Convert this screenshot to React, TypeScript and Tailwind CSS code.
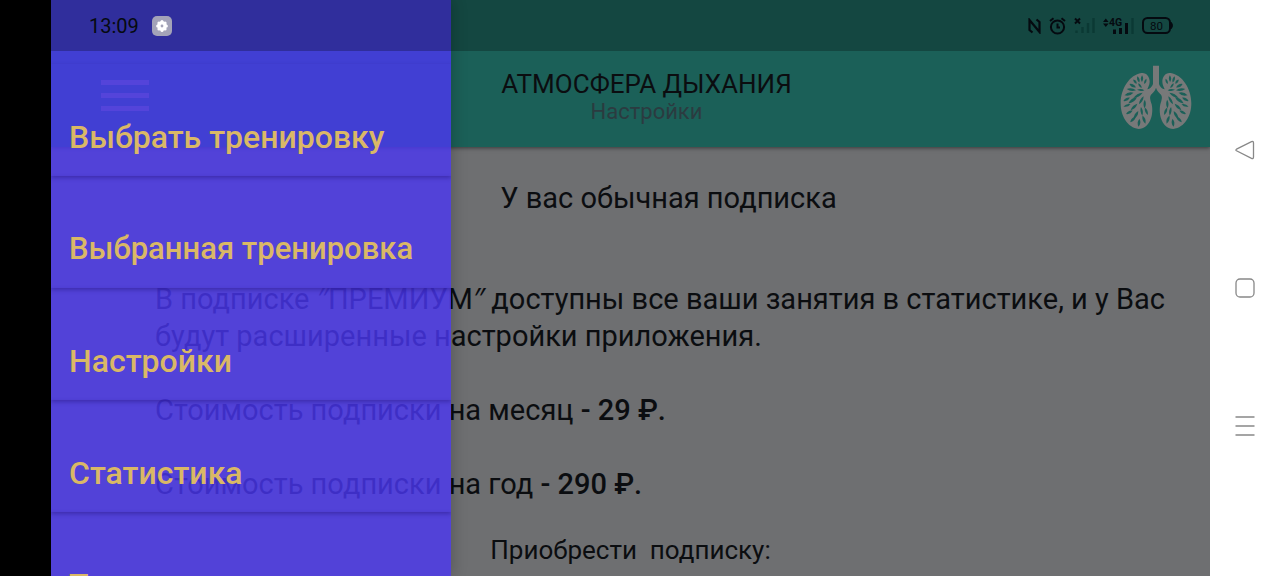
import React from "react";

type Leaf = [x: number, y: number, length: number, width: number, angle: number];

const leaves: Leaf[] = [
  [73, 78, 16, 7, 50],
  [83, 71, 20, 7, 72],
  [94, 69, 20, 7, 92],
  [104, 77, 17, 6, 112],
  [66, 90, 22, 8, 28],
  [88, 90, 18, 6, 55],
  [62, 102, 28, 8, 8],
  [90, 103, 22, 6, 2],
  [55, 115, 28, 9, -16],
  [82, 119, 32, 8, -30],
  [48, 131, 22, 8, -28],
  [66, 134, 32, 9, -35],
  [92, 134, 28, 7, -60],
  [49, 149, 22, 7, -18],
  [70, 154, 28, 8, -44],
  [102, 145, 26, 7, -88],
  [56, 170, 22, 8, -28],
  [76, 178, 28, 8, -60],
  [93, 167, 26, 7, 80],
  [107, 167, 24, 7, 68],
  [67, 191, 24, 8, -46],
  [85, 201, 24, 8, -84],
  [100, 192, 26, 8, 70],
];

function Lung() {
  return (
    <g>
      <path
        fill="#777979"
        d="M92 52C108 50 117 64 117 78C117 88 112 94 110 101C120 98 127 91 128 78L136 78L136 96C133 106 127 110 121 117C116 124 119 133 123 146C130 178 117 219 84 220C50 216 30 181 30 143C30 98 58 57 92 52Z"
      />
      {leaves.map(([x, y, length, width, angle]) => (
        <path
          key={`${x}-${y}`}
          fill="#1b6058"
          transform={`translate(${x} ${y}) rotate(${angle})`}
          d={`M${-length / 2} 0Q0 ${-width} ${length / 2} 0Q0 ${width} ${-length / 2} 0Z`}
        />
      ))}
    </g>
  );
}

function LungsLogo() {
  return (
    <svg viewBox="28 28 216 195" className="h-[65px] w-18" role="img" aria-label="Лёгкие">
      <Lung />
      <g transform="translate(272 0) scale(-1 1)">
        <Lung />
      </g>
      <path fill="#777979" d="M127 30H145V98L136 90L127 98Z" />
    </svg>
  );
}

function StatusBar() {
  return (
    <div className="absolute inset-x-0 top-0 z-20 flex h-[51px] items-center justify-between bg-black/26 pr-9 pl-[38px] text-[#050a10]">
      <div className="flex items-center gap-[13px]">
        <span className="text-xl">13:09</span>
        <svg viewBox="0 0 20 20" className="size-5" aria-hidden="true">
          <rect width="20" height="20" rx="5" fill="#a3a3b8" />
          <g fill="#fff">
            <circle cx="10" cy="10" r="4.8" />
            <circle cx="10" cy="5.6" r="1.5" />
            <circle cx="10" cy="14.4" r="1.5" />
            <circle cx="5.6" cy="10" r="1.5" />
            <circle cx="14.4" cy="10" r="1.5" />
            <circle cx="6.9" cy="6.9" r="1.5" />
            <circle cx="13.1" cy="6.9" r="1.5" />
            <circle cx="6.9" cy="13.1" r="1.5" />
            <circle cx="13.1" cy="13.1" r="1.5" />
          </g>
          <circle cx="10" cy="10" r="1.4" fill="#a3a3b8" />
        </svg>
      </div>
      <div className="flex items-center gap-2">
        <svg viewBox="0 0 13 16" className="h-4 w-[13px]" fill="none" stroke="currentColor" strokeWidth="2.2" aria-hidden="true">
          <path d="M4.500 14.500L1.500 12V2L11.500 14V4L8.500 1.500" />
        </svg>
        <svg viewBox="0 0 17 18" className="h-[18px] w-[17px]" fill="none" stroke="currentColor" strokeWidth="2" aria-hidden="true">
          <circle cx="8.500" cy="10" r="6.600" />
          <path d="M8.500 6.500V10.500H11M1 4L4.500 1.200M16 4L12.500 1.200" />
        </svg>
        <svg viewBox="0 0 21 17" className="h-[17px] w-[21px]" aria-hidden="true">
          <path d="M1 1.500L6 6.500M6 1.500L1 6.500" stroke="currentColor" strokeWidth="2" />
          <path d="M2.500 16V13.500M8.500 16V10M14 16V6M19.500 16V1" stroke="#05302b" strokeOpacity=".6" strokeWidth="2.400" />
        </svg>
        <svg viewBox="0 0 31 18" className="h-[18px] w-[31px]" aria-hidden="true">
          <path d="M0 5L2.800 1.500L5.600 5ZM0 6.500L2.800 10L5.600 6.500Z" fill="currentColor" />
          <text x="6" y="9" fontSize="10.500" fontWeight="700" fill="currentColor">4G</text>
          <path d="M11.500 17V12.500M17.500 17V11M23.500 17V6" stroke="currentColor" strokeWidth="3" />
          <path d="M29.500 17V1" stroke="#05302b" strokeOpacity=".6" strokeWidth="2.400" />
        </svg>
        <svg viewBox="0 0 32 17" className="h-[17px] w-8" aria-hidden="true">
          <rect x="1" y="1" width="27" height="15" rx="4.500" fill="none" stroke="currentColor" strokeWidth="2" />
          <path d="M29.500 5.500Q31.500 8.500 29.500 11.500Z" fill="currentColor" stroke="currentColor" />
          <text x="14.500" y="12.500" fontSize="11.500" textAnchor="middle" fill="currentColor">80</text>
        </svg>
      </div>
    </div>
  );
}

const menu = [
  { label: "Выбрать тренировку", size: "text-[32px]" },
  { label: "Выбранная тренировка", size: "text-[31px]" },
  { label: "Настройки", size: "text-[32px]" },
  { label: "Статистика", size: "text-[32px]" },
  { label: "Техника", size: "text-[32px]" },
];

function Drawer() {
  return (
    <nav className="absolute inset-y-0 left-0 z-10 w-[400px] overflow-hidden bg-[#4b37f2]/80 pt-16 shadow-[2px_0_14px_rgba(0,0,0,0.2)]">
      {menu.map(({ label, size }) => (
        <a
          key={label}
          href="#"
          className={`flex h-28 items-end pr-4 pb-[19px] pl-[18px] leading-10 font-medium whitespace-nowrap text-[#dab866] shadow-[0_2px_4px_rgba(30,15,110,0.4)] ${size}`}
        >
          {label}
        </a>
      ))}
    </nav>
  );
}

function SystemNav() {
  return (
    <nav className="flex w-[70px] shrink-0 flex-col items-center justify-center gap-[114px] bg-white text-[#888]">
      <button type="button" aria-label="Назад">
        <svg viewBox="0 0 24 24" className="size-6" fill="none" stroke="currentColor" strokeWidth="1.3">
          <path d="M3.500 11.200L18.500 3.600Q20.500 3 20.500 5V19Q20.500 21 18.500 20.400L3.500 12.800Q2.200 12 3.500 11.200Z" />
        </svg>
      </button>
      <button type="button" aria-label="Домой">
        <svg viewBox="0 0 24 24" className="size-6" fill="none" stroke="currentColor" strokeWidth="1.3">
          <rect x="3" y="3" width="18" height="18" rx="4" />
        </svg>
      </button>
      <button type="button" aria-label="Недавние">
        <svg viewBox="0 0 24 24" className="size-6" fill="none" stroke="currentColor" strokeWidth="1.3">
          <path d="M2.500 3H21.500M2.500 12H21.500M2.500 21H21.500" />
        </svg>
      </button>
    </nav>
  );
}

function Quote() {
  return <span className="font-['Open_Sans','Noto_Sans',sans-serif] leading-none font-medium italic">″</span>;
}

export default function App() {
  return (
    <div className="flex h-screen overflow-hidden bg-black font-['Roboto','Noto_Sans',sans-serif]">
      <div className="w-[51px] shrink-0" />
      <div className="relative flex min-w-0 flex-1 flex-col overflow-hidden bg-[#6e6f71] text-[#0b0d10]">
        <StatusBar />
        <Drawer />
        <header className="flex h-[147px] shrink-0 items-center bg-[#1b6058] pt-[51px] pr-[18px] pb-1 pl-[50px] shadow-[0_1px_4px_rgba(0,0,0,0.5)]">
          <button type="button" aria-label="Меню" className="mb-1 flex w-12 flex-col gap-2">
            <span className="h-[5px] bg-[#777]" />
            <span className="h-[5px] bg-[#777]" />
            <span className="h-[5px] bg-[#777]" />
          </button>
          <div className="flex-1 pt-0.5 pl-6 text-center">
            <h1 className="text-[26px] leading-7">АТМОСФЕРА ДЫХАНИЯ</h1>
            <p className="text-[22px] leading-7 text-[#2b3b40]">Настройки</p>
          </div>
          <LungsLogo />
        </header>
        <main className="flex flex-col pt-[33px] pr-8 pl-[104px] text-[29px] leading-[37px]">
          <h2 className="pl-1 text-center">У вас обычная подписка</h2>
          <p className="mt-16">
            В подписке <Quote />ПРЕМИУМ<Quote /> доступны все ваши занятия в статистике, и у Вас будут расширенные настройки
            приложения.
          </p>
          <p className="mt-[37px]">
            Стоимость подписки на месяц <span className="font-medium">- 29 ₽.</span>
          </p>
          <p className="mt-[37px]">
            Стоимость подписки на год <span className="font-medium">- 290 ₽.</span>
          </p>
          <p className="mt-[29px] pr-[72px] text-center text-[26px] whitespace-pre">Приобрести  подписку:</p>
        </main>
      </div>
      <SystemNav />
    </div>
  );
}
